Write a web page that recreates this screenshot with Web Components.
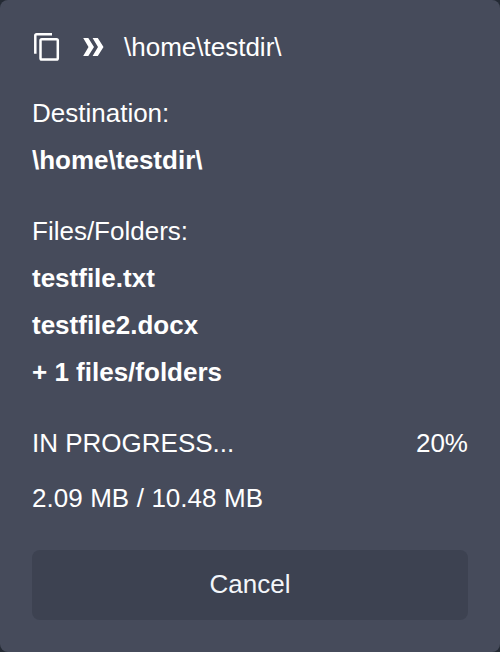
<!DOCTYPE html>
<html lang="en"><head><meta charset="utf-8"><title>File transfer</title>
<style>html,body{margin:0;height:100%;background:#242a34}body{font:26px/47px "Liberation Sans",Arial,sans-serif;color:#fff}</style></head>
<body>
<transfer-card>
<transfer-heading slot="head">\home\testdir\</transfer-heading>
<transfer-group label="Destination:"><span>\home\testdir\</span></transfer-group>
<transfer-group label="Files/Folders:"><span>testfile.txt</span><span>testfile2.docx</span><span>+ 1 files/folders</span></transfer-group>
<transfer-status slot="foot"><span slot="state">IN PROGRESS...</span><span slot="percent">20%</span><span slot="size">2.09 MB / 10.48 MB</span></transfer-status>
<transfer-button slot="foot">Cancel</transfer-button>
</transfer-card>
<script>
const define=(name,html)=>customElements.define(name,class extends HTMLElement{
constructor(){super();this.attachShadow({mode:'open'}).innerHTML=html;}
connectedCallback(){const l=this.shadowRoot.querySelector('.label');if(l)l.textContent=this.getAttribute('label');}
});
define('transfer-card',`<style>:host{display:flex;flex-direction:column;box-sizing:border-box;height:652px;padding:24px 32px 32px;background:#464b5b;border-radius:8px}.groups{display:flex;flex-direction:column;gap:24px;margin:19px 0 24px}</style><slot name="head"></slot><div class="groups"><slot></slot></div><slot name="foot"></slot>`);
define('transfer-heading',`<style>:host{display:flex;align-items:center;height:47px}svg{width:30px;height:31px;margin-right:16px}</style><svg viewBox="0 0 30 31" fill="none" stroke="#fff" stroke-width="2.5"><path d="M3.300 21.700V3.500Q3.300 2.200 4.600 2.200H20"/><rect x="8.500" y="7.300" width="17.300" height="20.300" rx="1.300"/></svg><svg viewBox="0 0 30 31" fill="#fff"><path d="M5.200 6H10.300L16 15L10.300 24H5.200L10.500 15ZM14.600 6H19.800L25.500 15L19.800 24H14.600L20 15Z"/></svg><slot></slot>`);
define('transfer-group',`<style>:host{display:flex;flex-direction:column}::slotted(span){font-weight:700}</style><div class="label"></div><slot></slot>`);
define('transfer-status',`<style>:host{display:flex;flex-direction:column;gap:8px}.row{display:flex;justify-content:space-between}::slotted([slot=size]){word-spacing:.3px}</style><div class="row"><slot name="state"></slot><slot name="percent"></slot></div><slot name="size"></slot>`);
define('transfer-button',`<style>:host{display:block;margin-top:auto}button{display:block;width:100%;height:70px;border:0;border-radius:8px;background:#3d4251;color:#f3f6fa;font:inherit;padding:0 0 2px}</style><button><slot></slot></button>`);
</script></body></html>
